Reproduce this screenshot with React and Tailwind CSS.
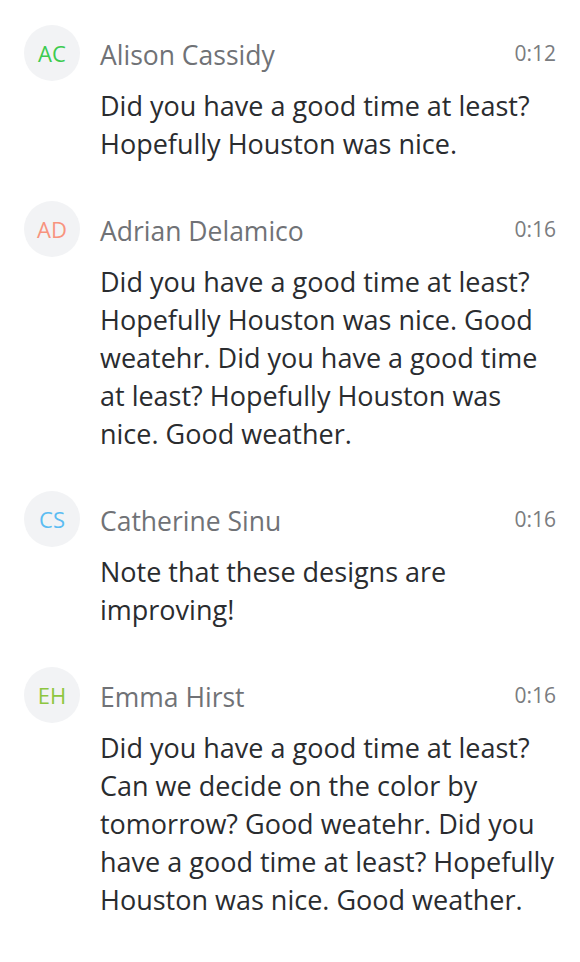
const MESSAGES = [
  {
    initials: 'AC',
    color: 'text-[#3ccb4f]',
    name: 'Alison Cassidy',
    time: '0:12',
    text: 'Did you have a good time at least? Hopefully Houston was nice.',
  },
  {
    initials: 'AD',
    color: 'text-[#f8937e]',
    name: 'Adrian Delamico',
    time: '0:16',
    text: 'Did you have a good time at least? Hopefully Houston was nice. Good weatehr. Did you have a good time at least? Hopefully Houston was nice. Good weather.',
  },
  {
    initials: 'CS',
    color: 'text-[#5bbcf2]',
    name: 'Catherine Sinu',
    time: '0:16',
    text: 'Note that these designs are improving!',
  },
  {
    initials: 'EH',
    color: 'text-[#8dc63f]',
    name: 'Emma Hirst',
    time: '0:16',
    text: 'Did you have a good time at least? Can we decide on the color by tomorrow? Good weatehr. Did you have a good time at least? Hopefully Houston was nice. Good weather.',
  },
]

export default function App() {
  return (
    <div
      className="min-h-screen bg-white pt-[25px] pl-6 pr-6"
      style={{ fontFamily: '"Open Sans", "Noto Sans", sans-serif' }}
    >
      {MESSAGES.map((m) => (
        <div key={m.name} className="flex gap-5 mb-[38px]">
          {/* Avatar */}
          <div className="w-14 h-14 rounded-full bg-[#f2f3f5] flex items-center justify-center flex-shrink-0">
            <span className={`text-[22px] ${m.color}`}>{m.initials}</span>
          </div>

          {/* Body */}
          <div className="flex-1 min-w-0">
            <div className="h-14 flex items-center justify-between">
              <span className="pt-[5px] text-[26.5px] text-[#707276]">{m.name}</span>
              <span className="pt-[1px] text-[21px] text-[#7a7c80]">{m.time}</span>
            </div>
            <p className="mt-[6px] text-[27px] leading-[38px] text-[#2a2c2f]">{m.text}</p>
          </div>
        </div>
      ))}
    </div>
  )
}
